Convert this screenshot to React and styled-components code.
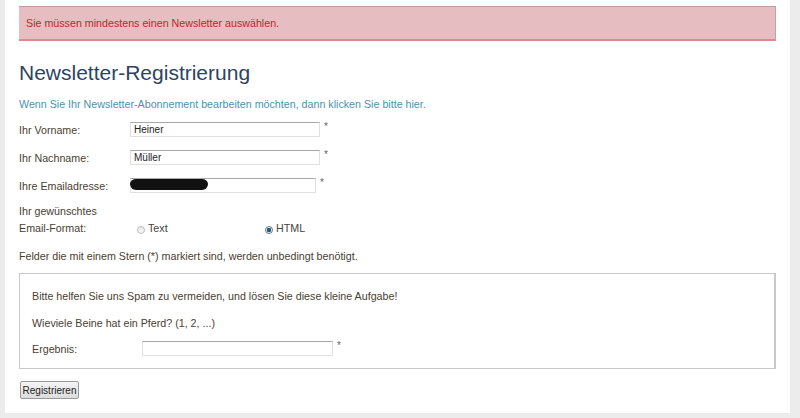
import React from "react";
import styled, { createGlobalStyle } from "styled-components";

const GlobalStyle = createGlobalStyle`
  html, body {
    margin: 0;
    padding: 0;
    background: #ececec;
    font-family: "Liberation Sans", Arial, sans-serif;
  }
`;

const Page = styled.div`
  width: 785px;
  height: 413px;
  margin-left: 5px;
  background: #fff;
  padding: 6px 14px 0 14px;
  box-sizing: border-box;
  overflow: hidden;
`;

const Alert = styled.div`
  height: 35px;
  box-sizing: border-box;
  background: #e6bdc0;
  border-top: 1px solid #c99a9c;
  border-bottom: 2px solid #e2878b;
  border-right: 1px solid #c9a0a3;
  color: #c0262c;
  font-size: 10.7px;
  padding: 10px 7px 0;
`;

const Heading = styled.h1`
  margin: 20px 0 0;
  font-weight: normal;
  font-size: 21px;
  line-height: 24px;
  color: #2b4562;
`;

const Lead = styled.p`
  margin: 12px 0 0;
  font-size: 10.7px;
  line-height: 14px;
  color: #4a93b4;
`;

const Row = styled.div`
  display: grid;
  grid-template-columns: ${(p) => p.labelWidth || 111}px auto;
  align-items: center;
  margin-top: ${(p) => p.top || 0}px;
  font-size: 10.7px;
  color: #4a4030;
`;

const Field = styled.div`
  display: flex;
  align-items: flex-start;
`;

const Input = styled.input`
  width: ${(p) => p.w || 190}px;
  height: 15px;
  box-sizing: border-box;
  border: 1px solid #e0e0e0;
  border-top-color: #a8a8a8;
  font-family: "Liberation Sans", Arial, sans-serif;
  font-size: 10px;
  padding: 0 3px;
  color: #222;
  outline: none;
`;

const Star = styled.span`
  font-size: 10px;
  color: #666;
  margin-left: 4px;
  line-height: 10px;
`;

const Blot = styled.span`
  position: absolute;
  left: 0;
  top: 1px;
  width: 78px;
  height: 11px;
  background: #111;
  border-radius: 6px 6px 6px 6px / 5px 5px 6px 6px;
`;

const BlotWrap = styled.div`
  position: relative;
`;

const FormatBlock = styled.div`
  margin-top: 10px;
  font-size: 10.7px;
  line-height: 17px;
  color: #4a4030;
`;

const FormatRow = styled.div`
  display: grid;
  grid-template-columns: 118px 128px auto;
  align-items: center;
`;

const RadioLabel = styled.label`
  display: flex;
  align-items: center;
  gap: 3px;
  font-size: 10.7px;
  color: #444;
`;

const Radio = styled.span`
  width: 8px;
  height: 8px;
  margin-top: 3px;
  border-radius: 50%;
  border: 1px solid ${(p) => (p.checked ? "#5a7f95" : "#bbb")};
  background: ${(p) =>
    p.checked
      ? "radial-gradient(circle, #2c5d77 0 2px, #e4eef3 2.5px)"
      : "linear-gradient(#e8e8e8, #fafafa)"};
  box-sizing: border-box;
`;

const Note = styled.p`
  margin: 13px 0 0;
  font-size: 10.7px;
  color: #4a4030;
`;

const Captcha = styled.div`
  margin-top: 11px;
  height: 96px;
  box-sizing: border-box;
  border: 1px solid #c8c8c8;
  border-right-width: 2px;
  padding: 16px 12px 0;
  font-size: 10.7px;
  color: #4a4030;
`;

const CaptchaText = styled.p`
  margin: 0 0 ${(p) => p.gap || 14}px;
  line-height: 13px;
`;

const Button = styled.button`
  margin-top: 12px;
  margin-left: 1px;
  height: 18px;
  width: 59px;
  padding: 0;
  font-family: "Liberation Sans", Arial, sans-serif;
  font-size: 10px;
  color: #222;
  border: 1px solid #9a9a9a;
  border-radius: 2px;
  background: linear-gradient(#f4f4f4, #dcdcdc);
`;

export default function App() {
  return (
    <>
      <GlobalStyle />
      <Page>
        <Alert>Sie müssen mindestens einen Newsletter auswählen.</Alert>
        <Heading>Newsletter-Registrierung</Heading>
        <Lead>Wenn Sie Ihr Newsletter-Abonnement bearbeiten möchten, dann klicken Sie bitte hier.</Lead>

        <Row top={11}>
          <span>Ihr Vorname:</span>
          <Field>
            <Input defaultValue="Heiner" />
            <Star>*</Star>
          </Field>
        </Row>
        <Row top={13}>
          <span>Ihr Nachname:</span>
          <Field>
            <Input defaultValue="Müller" />
            <Star>*</Star>
          </Field>
        </Row>
        <Row top={13}>
          <span>Ihre Emailadresse:</span>
          <Field>
            <BlotWrap>
              <Input w={186} defaultValue="" />
              <Blot />
            </BlotWrap>
            <Star>*</Star>
          </Field>
        </Row>

        <FormatBlock>
          <div>Ihr gewünschtes</div>
          <FormatRow>
            <span>Email-Format:</span>
            <RadioLabel>
              <Radio />
              Text
            </RadioLabel>
            <RadioLabel>
              <Radio checked />
              HTML
            </RadioLabel>
          </FormatRow>
        </FormatBlock>

        <Note>Felder die mit einem Stern (*) markiert sind, werden unbedingt benötigt.</Note>

        <Captcha>
          <CaptchaText>Bitte helfen Sie uns Spam zu vermeiden, und lösen Sie diese kleine Aufgabe!</CaptchaText>
          <CaptchaText gap={11}>Wieviele Beine hat ein Pferd? (1, 2, ...)</CaptchaText>
          <Row labelWidth={110}>
            <span>Ergebnis:</span>
            <Field>
              <Input w={191} defaultValue="" />
              <Star>*</Star>
            </Field>
          </Row>
        </Captcha>

        <Button>Registrieren</Button>
      </Page>
    </>
  );
}
